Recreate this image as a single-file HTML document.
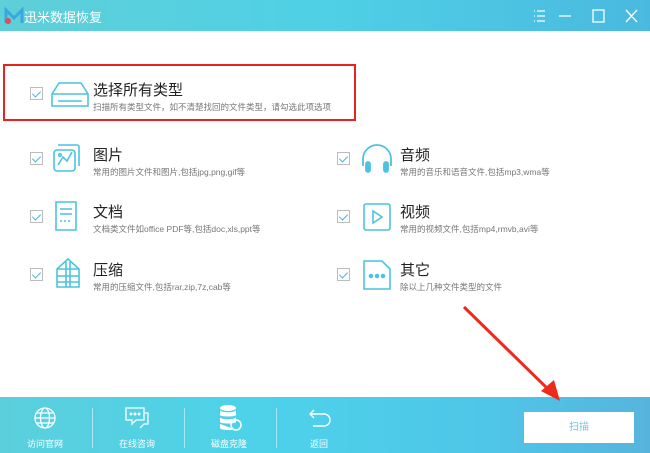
<!DOCTYPE html>
<html><head><meta charset="utf-8"><style>
*{margin:0;padding:0;box-sizing:border-box}
body{width:650px;height:453px;position:relative;overflow:hidden;background:#fff;font-family:"Liberation Sans","Noto Sans CJK SC",sans-serif}
.hdr{position:absolute;left:0;top:0;width:650px;height:31px;background:linear-gradient(90deg,#5fcfd8,#4fd0e6 50%,#4ab9df)}
.ttl{position:absolute;left:24px;top:7px;color:#fff;font-size:13px}
.ftr{position:absolute;left:0;top:397px;width:650px;height:56px;background:linear-gradient(90deg,#5bcfdc,#4dd2ea 40%,#4fc6e8 75%,#56b4dc)}
.cb{position:absolute;width:13px;height:13px;border:1px solid #bcbcbc;background:#fff}
.cb:after{content:"";position:absolute;left:3px;top:1px;width:4px;height:7px;border:solid #45b8dc;border-width:0 1.5px 1.5px 0;transform:rotate(45deg)}
.t{position:absolute;font-size:15px;color:#222}
.d{position:absolute;font-size:8.5px;color:#777;white-space:nowrap}
.fi{position:absolute;color:#fff;font-size:9px;text-align:center;width:60px}
.sep{position:absolute;top:408px;width:1px;height:40px;background:rgba(255,255,255,.5)}
svg{position:absolute}
</style></head><body>
<div class="hdr"></div>
<svg style="left:4px;top:6px" width="20" height="20" viewBox="0 0 20 20"><path d="M2 17V4l8 8 8-8v13" fill="none" stroke="#3aa8e0" stroke-width="3"/><circle cx="4" cy="15" r="3" fill="#e04a5a"/></svg>
<div class="ttl">迅米数据恢复</div>
<svg style="left:532px;top:9px" width="110" height="14" viewBox="0 0 110 14" stroke="#fff" stroke-width="1.3" fill="none"><path d="M2 2h1M5 2h8M2 7h1M5 7h8M2 12h1M5 12h8M27 7h12M61 1h11v12H61zM94 1l11 12M105 1L94 13"/></svg>

<div style="position:absolute;left:3px;top:64px;width:353px;height:57px;border:2px solid #e8221c"></div>
<div class="cb" style="left:30px;top:87px"></div>
<svg style="left:50px;top:80px" width="40" height="30" viewBox="0 0 40 30" fill="none" stroke="#4cc3df" stroke-width="1.6"><path d="M2 14L9 3h22l7 11v12H2z M2 14h36M8 21h24"/></svg>
<div class="t" style="left:93px;top:79px">选择所有类型</div>
<div class="d" style="left:93px;top:101px">扫描所有类型文件，如不清楚找回的文件类型，请勾选此项选项</div>

<div class="cb" style="left:30px;top:152px"></div>
<svg style="left:52px;top:143px" width="30" height="30" viewBox="0 0 30 30" fill="none" stroke="#4cc3df" stroke-width="1.6"><path d="M6 2h19a2 2 0 0 1 2 2v19"/><rect x="2" y="7" width="21" height="21" rx="3"/><path d="M6 22l5-8 4 4 5-9"/><circle cx="8" cy="12" r="1.3"/></svg>
<div class="t" style="left:93px;top:144px">图片</div>
<div class="d" style="left:93px;top:166px">常用的图片文件和图片,包括jpg,png,gif等</div>

<div class="cb" style="left:30px;top:210px"></div>
<svg style="left:54px;top:200px" width="26" height="32" viewBox="0 0 26 32" fill="none" stroke="#4cc3df" stroke-width="1.6"><path d="M2 2h20v28H2zM6 9h12M6 14h12M6 21h2M10 21h2M14 21h2"/></svg>
<div class="t" style="left:93px;top:201px">文档</div>
<div class="d" style="left:93px;top:223px">文档类文件如office PDF等,包括doc,xls,ppt等</div>

<div class="cb" style="left:30px;top:268px"></div>
<svg style="left:54px;top:257px" width="28" height="32" viewBox="0 0 28 32" fill="none" stroke="#4cc3df" stroke-width="1.6"><path d="M3 12L14 2l11 10v18H3zM3 12h22M3 19h22M3 25h22M12 5v25M16 5v25"/></svg>
<div class="t" style="left:93px;top:259px">压缩</div>
<div class="d" style="left:93px;top:281px">常用的压缩文件,包括rar,zip,7z,cab等</div>

<div class="cb" style="left:337px;top:152px"></div>
<svg style="left:360px;top:144px" width="34" height="30" viewBox="0 0 34 30" fill="none" stroke="#4cc3df" stroke-width="1.8"><path d="M3 22V15a14 14 0 0 1 28 0v7"/><rect x="6" y="18" width="4" height="10" rx="2" fill="#4cc3df"/><rect x="24" y="18" width="4" height="10" rx="2" fill="#4cc3df"/></svg>
<div class="t" style="left:400px;top:144px">音频</div>
<div class="d" style="left:400px;top:166px">常用的音乐和语音文件,包括mp3,wma等</div>

<div class="cb" style="left:337px;top:210px"></div>
<svg style="left:362px;top:202px" width="30" height="30" viewBox="0 0 30 30" fill="none" stroke="#4cc3df" stroke-width="1.6"><rect x="2" y="2" width="26" height="26" rx="2"/><path d="M11 9v12l9-6z"/></svg>
<div class="t" style="left:400px;top:201px">视频</div>
<div class="d" style="left:400px;top:223px">常用的视频文件,包括mp4,rmvb,avi等</div>

<div class="cb" style="left:337px;top:268px"></div>
<svg style="left:362px;top:259px" width="30" height="32" viewBox="0 0 30 32" fill="none" stroke="#4cc3df" stroke-width="1.6"><path d="M2 2h18l8 8v20H2z"/><circle cx="9" cy="17" r="1.5" fill="#4cc3df"/><circle cx="15" cy="17" r="1.5" fill="#4cc3df"/><circle cx="21" cy="17" r="1.5" fill="#4cc3df"/></svg>
<div class="t" style="left:400px;top:259px">其它</div>
<div class="d" style="left:400px;top:281px">除以上几种文件类型的文件</div>

<div class="ftr"></div>
<svg style="left:33px;top:406px" width="24" height="24" viewBox="0 0 24 24" fill="none" stroke="#fff" stroke-width="1.3"><circle cx="12" cy="12" r="10"/><ellipse cx="12" cy="12" rx="4.5" ry="10"/><path d="M2 12h20M4 7h16M4 17h16"/></svg>
<div class="fi" style="left:15px;top:437px">访问官网</div>
<div class="sep" style="left:92px"></div>
<svg style="left:124px;top:406px" width="26" height="24" viewBox="0 0 26 24" fill="none" stroke="#fff" stroke-width="1.3"><path d="M2 2h18v12h-8l-4 4v-4H2z"/><path d="M20 7h4v11h-4l-4 4"/><circle cx="7" cy="8" r=".8" fill="#fff"/><circle cx="11" cy="8" r=".8" fill="#fff"/><circle cx="15" cy="8" r=".8" fill="#fff"/></svg>
<div class="fi" style="left:107px;top:437px">在线咨询</div>
<div class="sep" style="left:184px"></div>
<svg style="left:218px;top:404px" width="24" height="28" viewBox="0 0 24 28" fill="#fff"><ellipse cx="10" cy="4" rx="8" ry="3"/><path d="M2 6v5c0 2 16 2 16 0V6c0 3-16 3-16 0zM2 13v5c0 2 16 2 16 0v-5c0 3-16 3-16 0zM2 20v4c0 2 12 3 14 1"/><circle cx="18" cy="21" r="5" fill="none" stroke="#fff" stroke-width="1.5"/></svg>
<div class="fi" style="left:199px;top:437px">磁盘克隆</div>
<div class="sep" style="left:276px"></div>
<svg style="left:308px;top:408px" width="24" height="22" viewBox="0 0 24 22" fill="none" stroke="#fff" stroke-width="1.4"><path d="M6 2L2 6l4 4M2 6h14a6 6 0 0 1 0 12H5"/></svg>
<div class="fi" style="left:289px;top:437px">返回</div>
<div style="position:absolute;left:524px;top:412px;width:110px;height:31px;background:#fff;color:#6cc7e6;font-size:10px;text-align:center;line-height:31px">扫描</div>

<svg style="left:0;top:0" width="650" height="453" viewBox="0 0 650 453"><path d="M464 307L551 392" stroke="#ee2a1c" stroke-width="3"/><path d="M560 401L541 391L554 380z" fill="#ee2a1c"/></svg>
</body></html>
